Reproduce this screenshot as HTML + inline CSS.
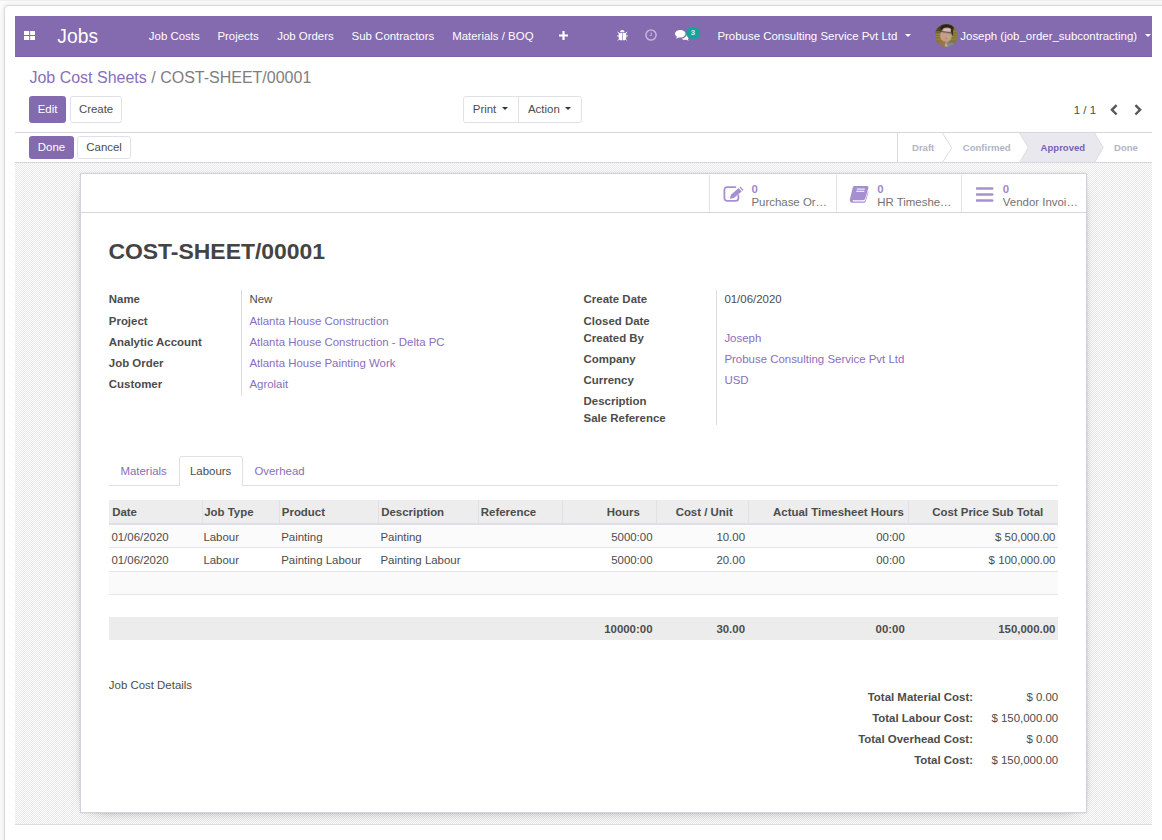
<!DOCTYPE html>
<html>
<head>
<meta charset="utf-8">
<title>COST-SHEET/00001 - Odoo</title>
<style>
*{box-sizing:border-box;margin:0;padding:0}
html,body{width:1162px;height:840px;overflow:hidden}
body{background:#fbfbfb;font-family:"Liberation Sans",sans-serif;font-size:11.45px;color:#4c4c4c;position:relative}
.topstrip{position:absolute;left:0;top:0;width:1162px;height:1px;background:#efefef}
.frame{position:absolute;left:4px;top:5px;width:1300px;height:900px;background:#fff;border:1px solid #d9d9d9;border-radius:4px;box-shadow:0 0 4px 1px rgba(0,0,0,.07)}
.shot{position:absolute;left:15px;top:16px;width:1137px;height:809px;overflow:hidden;background:#fff;border-bottom:1px solid #dcdcdc}
/* everything inside .shot is positioned in page coords minus (15,16) via wrapper */
.abs{position:absolute;left:-15px;top:-16px;width:1162px;height:840px}
.abs *{position:absolute;white-space:nowrap}
.nav{left:15px;top:16px;width:1137px;height:40.5px;background:#846aae;border-bottom:1px solid #7c60a8}
.nt{color:#fff;font-size:11.45px;line-height:14px;top:29.2px}
.brand{color:#fff;font-size:19.3px;line-height:22px;left:57.3px;top:25.9px}
.lnk{color:#8a6ebc}
.b{font-weight:bold}
.btn{height:27px;top:96px;border:1px solid #dfe1ea;border-radius:2.6px;background:#fff;font-size:11.45px;line-height:25px;text-align:center;color:#4c4c4c}
.btn.p{background:#846aae;border-color:#846aae;color:#fff}
.btn2{height:22.4px;top:136.2px;border:1px solid #dfe1ea;border-radius:2.6px;background:#fff;font-size:11.45px;line-height:20.4px;text-align:center;color:#4c4c4c}
.btn2.p{background:#846aae;border-color:#846aae;color:#fff}
.hl{height:1px;background:#d5d6de}
.car{width:0;height:0;border-left:3.2px solid transparent;border-right:3.2px solid transparent;border-top:3.6px solid #fff}
.bg{left:15px;top:163px;width:1137px;height:662px;background:repeating-conic-gradient(#e9e9e9 0% 25%,#fdfdfd 0% 50%) 0 0/2px 2px}
.sheet{left:80px;top:173px;width:1007.4px;height:639.6px;background:#fff;border:1px solid #d3d1e0;box-shadow:0 4.4px 17.6px -13px #000,0 0 2px rgba(0,0,0,.10)}
.lab{font-weight:bold;line-height:14px;font-size:11.45px;color:#4c4c4c}
.val{line-height:14px;font-size:11.45px}
.sb{font-size:9.55px;font-weight:bold;line-height:14px;top:140.8px;color:#b0b4c4}
.r{text-align:right}
</style>
</head>
<body>
<div class="topstrip"></div>
<div class="frame"></div>
<div class="shot"><div class="abs">

<!-- NAVBAR -->
<div class="nav"></div>
<svg style="left:23.6px;top:31.2px" width="11.4" height="9" viewBox="0 0 11.4 9"><rect x="0" y="0" width="5.2" height="4" fill="#fff"/><rect x="6.2" y="0" width="5.2" height="4" fill="#fff"/><rect x="0" y="5" width="5.2" height="4" fill="#fff"/><rect x="6.2" y="5" width="5.2" height="4" fill="#fff"/></svg>
<div class="brand">Jobs</div>
<div class="nt" style="left:148.8px">Job Costs</div>
<div class="nt" style="left:217.4px">Projects</div>
<div class="nt" style="left:277.2px">Job Orders</div>
<div class="nt" style="left:351.6px">Sub Contractors</div>
<div class="nt" style="left:452.2px">Materials / BOQ</div>
<svg style="left:559px;top:31.4px" width="9" height="9" viewBox="0 0 9 9"><path d="M3.4 0h2.2v3.4H9v2.2H5.6V9H3.4V5.6H0V3.4h3.4z" fill="#fff"/></svg>

<!-- bug -->
<svg style="left:617.2px;top:30px" width="10.9" height="10.9" viewBox="150 165 225 225"><g fill="#fff" stroke="none"><path d="M213 212A47 47 0 0 1 307 212z"/><path d="M185 228H256V378H245A60 60 0 0 1 185 318zM268 228H340V318A60 60 0 0 1 280 378H268z"/></g><g stroke="#fff" stroke-width="20" fill="none"><path d="M165 203L202 245M357 203L320 245M150 288H190M335 288H375M168 382L206 344M350 382L316 344"/></g></svg>
<!-- clock -->
<svg style="left:645.3px;top:29px" width="12" height="12" viewBox="0 0 12 12"><circle cx="6" cy="6" r="5.1" fill="none" stroke="#fff" stroke-opacity=".5" stroke-width="1.5"/><path d="M6.300 3.400v3.100H4.700" fill="none" stroke="#fff" stroke-opacity=".45" stroke-width="1.1"/></svg>
<!-- chat -->
<svg style="left:674.6px;top:29.6px" width="14" height="11.6" viewBox="0 0 28 23"><g fill="#fff"><path d="M10.5 0C4.700 0 0 3.400 0 7.600c0 2.400 1.500 4.500 3.900 5.900-.4 1.300-1.200 2.500-2.300 3.300 2.300-.1 4.300-.9 5.900-2.100 1 .2 2 .4 3 .4 5.800 0 10.500-3.400 10.500-7.600S16.300 0 10.500 0z"/><path d="M23.300 9.500c-.6 3.900-4.700 7.100-10 7.700 1.700 1.500 4.300 2.400 7.100 2.400.8 0 1.600-.1 2.300-.2 1.400 1 3.100 1.700 5 1.800-1-.8-1.600-1.800-1.900-2.900 1.400-1 2.200-2.400 2.200-4 0-2-1.900-3.900-4.700-4.800z"/></g></svg>
<div style="left:686px;top:27.1px;width:14px;height:11.8px;border-radius:6px;background:#17a398"></div>
<div style="left:686px;top:27.1px;width:14px;line-height:11.8px;text-align:center;font-size:7.8px;font-weight:bold;color:#d4f0ee">3</div>

<div class="nt" style="left:717.4px">Probuse Consulting Service Pvt Ltd</div>
<div class="car" style="left:905px;top:33.8px"></div>
<!-- avatar -->
<svg style="left:934.6px;top:24.1px" width="22.8" height="22.8" viewBox="240 115 640 640"><defs><clipPath id="av"><circle cx="560" cy="435" r="320"/></clipPath><filter id="bl" x="-10%" y="-10%" width="120%" height="120%"><feGaussianBlur stdDeviation="19"/></filter></defs><g clip-path="url(#av)"><rect x="200" y="80" width="720" height="720" fill="#84753a"/><g filter="url(#bl)"><ellipse cx="330" cy="200" rx="210" ry="160" fill="#40381e" opacity=".8"/><path d="M240 335H880M240 405H880M240 475H880M240 545H880" stroke="#a89a50" stroke-width="30" opacity=".5"/><path d="M240 370H880M240 440H880M240 510H880" stroke="#665a28" stroke-width="14" opacity=".5"/><ellipse cx="575" cy="235" rx="190" ry="115" fill="#2a221b"/><rect x="685" y="230" width="60" height="200" rx="30" fill="#30281f"/><ellipse cx="548" cy="430" rx="165" ry="200" fill="#c4a08c"/><ellipse cx="575" cy="280" rx="115" ry="60" fill="#d6bbb0"/><path d="M395 320L705 372" stroke="#403a36" stroke-width="36" opacity=".75" stroke-linecap="round"/><ellipse cx="550" cy="522" rx="48" ry="20" fill="#bf8486"/><ellipse cx="450" cy="665" rx="120" ry="75" fill="#9c7444"/><path d="M570 635L790 650L720 780H530z" fill="#7f8a96"/><path d="M545 600L600 760H505z" fill="#c8aa96"/></g></g></svg>
<div class="nt" style="left:960.3px">Joseph (job_order_subcontracting)</div>
<div class="car" style="left:1145px;top:33.8px"></div>

<!-- CONTROL PANEL -->
<div style="left:29.4px;top:68.1px;font-size:16px;line-height:20px;color:#7e7e7e"><span class="lnk" style="position:static">Job Cost Sheets</span> / COST-SHEET/00001</div>
<div class="btn p" style="left:29px;width:37.2px">Edit</div>
<div class="btn" style="left:70.4px;width:51.4px">Create</div>
<div class="btn" style="left:463.2px;width:56px;border-radius:2.6px 0 0 2.6px;text-align:left;padding-left:8.6px">Print</div>
<div class="btn" style="left:518.4px;width:63.8px;border-radius:0 2.6px 2.6px 0;text-align:left;padding-left:8.6px">Action</div>
<div class="car" style="left:502.2px;top:107.2px;border-top-color:#333"></div>
<div class="car" style="left:564.6px;top:107.2px;border-top-color:#333"></div>
<div style="left:1073.8px;top:102.6px;font-size:11.45px;line-height:14px;color:#4c4c4c;letter-spacing:0">1 / 1</div>
<svg style="left:1109.6px;top:104px" width="8" height="11.6" viewBox="0 0 8 11.6"><path d="M6.600 1.100L1.900 5.800l4.700 4.700" fill="none" stroke="#585858" stroke-width="2.400"/></svg>
<svg style="left:1134.4px;top:104px" width="8" height="11.6" viewBox="0 0 8 11.6"><path d="M1.400 1.100L6.100 5.800l-4.700 4.700" fill="none" stroke="#585858" stroke-width="2.400"/></svg>
<div class="hl" style="left:15px;top:132.2px;width:1137px"></div>

<!-- STATUS BAR -->
<div class="btn2 p" style="left:29px;width:45px">Done</div>
<div class="btn2" style="left:77.4px;width:53.4px">Cancel</div>
<div style="left:897.2px;top:133px;width:1px;height:29.4px;background:#d8d8e0"></div>
<svg style="left:898px;top:133.2px" width="254" height="29.4" viewBox="0 0 254 29.4">
 <path d="M121.600 0H196.600L205.200 14.700 196.600 29.400H121.600L130.200 14.700z" fill="#e8e8ee"/>
 <path d="M44.400 0L53.800 14.700 44.400 29.400" fill="none" stroke="#dcdce4" stroke-width="1"/>
 <path d="M121.600 0L130.200 14.700 121.600 29.400" fill="none" stroke="#dcdce4" stroke-width="1"/>
 <path d="M196.600 0L205.200 14.700 196.600 29.400" fill="none" stroke="#dcdce4" stroke-width="1"/>
</svg>
<div class="sb" style="left:912px">Draft</div>
<div class="sb" style="left:962.8px">Confirmed</div>
<div class="sb" style="left:1040.6px;color:#7b5fb0">Approved</div>
<div class="sb" style="left:1114px">Done</div>
<div class="hl" style="left:15px;top:162.4px;width:1137px"></div>

<!-- CONTENT BG + SHEET -->
<div class="bg"></div>
<div class="sheet"></div>

<!-- STAT BUTTONS -->
<div class="hl" style="left:80.5px;top:211.8px;width:1006px;background:#d6d4e2"></div>
<div style="left:709px;top:174.5px;width:1px;height:37.5px;background:#e3e1ec"></div>
<div style="left:835.6px;top:174.5px;width:1px;height:37.5px;background:#e3e1ec"></div>
<div style="left:961.4px;top:174.5px;width:1px;height:37.5px;background:#e3e1ec"></div>
<!-- pencil-square -->
<svg style="left:723px;top:185px" width="22" height="18" viewBox="0 0 22 18"><path d="M12.400 2.200H4a2.600 2.600 0 0 0-2.600 2.600V13.300a2.600 2.600 0 0 0 2.600 2.600H12.800a2.600 2.600 0 0 0 2.600-2.600V10.400" fill="none" stroke="#a690d3" stroke-width="1.800" stroke-linecap="round"/><path d="M6.900 13.700L7.900 9.800 15.700 3.100 18.700 6.500 10.900 13.000zM16.600 2.400L17.600 1.500 20.600 4.900 19.600 5.800z" fill="#a690d3"/></svg>
<div class="b" style="left:751.4px;top:182.4px;line-height:14px;color:#9f88d2">0</div>
<div style="left:751.4px;top:195.4px;line-height:14px;color:#727272">Purchase Or…</div>
<!-- book -->
<svg style="left:849.4px;top:186.4px" width="19.6" height="17" viewBox="0 0 19.6 17"><path d="M5.600 0h12.400a1.400 1.400 0 0 1 1.400 1.900L16.200 12.800a2 2 0 0 1-1.900 1.400H4.200c-.900 0-.900 1.200 0 1.200h10.600c.800 0 1.300-.400 1.600-1.200l2.600-8.800.600.300-2.700 9.200c-.400 1.200-1.200 1.900-2.400 1.900H3.600c-2.600 0-3.200-2.200-2.600-4L3.800 1.400C4.100.500 4.700 0 5.600 0z" fill="#a58fd0"/><path d="M7.800 3.100h8M7.300 5.300h8" stroke="#fff" stroke-width="1"/></svg>
<div class="b" style="left:877.2px;top:182.4px;line-height:14px;color:#9f88d2">0</div>
<div style="left:877.2px;top:195.4px;line-height:14px;color:#727272">HR Timeshe…</div>
<!-- bars -->
<svg style="left:976.4px;top:187.4px" width="17.2" height="15" viewBox="0 0 17.2 15"><path d="M1 1.500h15.200M1 7.500h15.200M1 13.500h15.200" stroke="#a690d3" stroke-width="2.700" stroke-linecap="round"/></svg>
<div class="b" style="left:1002.8px;top:182.4px;line-height:14px;color:#9f88d2">0</div>
<div style="left:1002.8px;top:195.4px;line-height:14px;color:#727272">Vendor Invoi…</div>

<!-- TITLE -->
<div class="b" style="left:108.4px;top:238.4px;font-size:22.95px;line-height:27px;color:#444">COST-SHEET/00001</div>

<!-- LEFT GROUP -->
<div style="left:241.4px;top:290.4px;width:1px;height:106px;background:#dcdce0"></div>
<div class="lab" style="left:108.8px;top:292.3px">Name</div>
<div class="lab" style="left:108.8px;top:313.5px">Project</div>
<div class="lab" style="left:108.8px;top:334.7px">Analytic Account</div>
<div class="lab" style="left:108.8px;top:355.9px">Job Order</div>
<div class="lab" style="left:108.8px;top:377.1px">Customer</div>
<div class="val" style="left:249.4px;top:292.3px">New</div>
<div class="val lnk" style="left:249.4px;top:313.5px">Atlanta House Construction</div>
<div class="val lnk" style="left:249.4px;top:334.7px">Atlanta House Construction - Delta PC</div>
<div class="val lnk" style="left:249.4px;top:355.9px">Atlanta House Painting Work</div>
<div class="val lnk" style="left:249.4px;top:377.1px">Agrolait</div>

<!-- RIGHT GROUP -->
<div style="left:716.2px;top:290.4px;width:1px;height:135px;background:#dcdce0"></div>
<div class="lab" style="left:583.6px;top:292.3px">Create Date</div>
<div class="lab" style="left:583.6px;top:313.5px">Closed Date</div>
<div class="lab" style="left:583.6px;top:330.5px">Created By</div>
<div class="lab" style="left:583.6px;top:351.7px">Company</div>
<div class="lab" style="left:583.6px;top:372.9px">Currency</div>
<div class="lab" style="left:583.6px;top:394.1px">Description</div>
<div class="lab" style="left:583.6px;top:411.1px">Sale Reference</div>
<div class="val" style="left:724.4px;top:292.3px">01/06/2020</div>
<div class="val lnk" style="left:724.4px;top:330.5px">Joseph</div>
<div class="val lnk" style="left:724.4px;top:351.7px">Probuse Consulting Service Pvt Ltd</div>
<div class="val lnk" style="left:724.4px;top:372.9px">USD</div>

<!-- TABS -->
<div class="hl" style="left:108.8px;top:484.8px;width:949.4px;background:#dfdfe8"></div>
<div style="left:178.6px;top:456.4px;width:64.2px;height:29.4px;background:#fff;border:1px solid #dfdfe8;border-bottom:none;border-radius:2.6px 2.6px 0 0"></div>
<div class="val lnk" style="left:120.4px;top:464.2px">Materials</div>
<div class="val" style="left:190px;top:464.2px;color:#4c4c4c">Labours</div>
<div class="val lnk" style="left:254.4px;top:464.2px">Overhead</div>

<!-- TABLE -->
<div style="left:108.8px;top:500px;width:949.4px;height:25px;background:#ededed;border-bottom:2px solid #dfdfe8"></div>
<div style="left:108.8px;top:525px;width:949.4px;height:22.6px;background:#fbfbfb"></div>
<div style="left:201.600px;top:500.2px;width:1px;height:23px;background:#e2e2e6"></div>
<div style="left:278.8px;top:500.2px;width:1px;height:23px;background:#e2e2e6"></div>
<div style="left:378.4px;top:500.2px;width:1px;height:23px;background:#e2e2e6"></div>
<div style="left:477.8px;top:500.2px;width:1px;height:23px;background:#e2e2e6"></div>
<div style="left:562.2px;top:500.2px;width:1px;height:23px;background:#e2e2e6"></div>
<div style="left:656.2px;top:500.2px;width:1px;height:23px;background:#e2e2e6"></div>
<div style="left:748.2px;top:500.2px;width:1px;height:23px;background:#e2e2e6"></div>
<div style="left:907.600px;top:500.2px;width:1px;height:23px;background:#e2e2e6"></div>
<div class="lab" style="left:112.2px;top:505.1px">Date</div>
<div class="lab" style="left:204.2px;top:505.1px">Job Type</div>
<div class="lab" style="left:281.8px;top:505.1px">Product</div>
<div class="lab" style="left:381.2px;top:505.1px">Description</div>
<div class="lab" style="left:480.8px;top:505.1px">Reference</div>
<div class="lab r" style="right:522.2px;top:505.1px">Hours</div>
<div class="lab r" style="right:429.2px;top:505.1px">Cost / Unit</div>
<div class="lab r" style="right:258.2px;top:505.1px">Actual Timesheet Hours</div>
<div class="lab r" style="right:118.8px;top:505.1px">Cost Price Sub Total</div>

<div class="hl" style="left:108.8px;top:547.4px;width:949.4px;background:#e4e4ea"></div>
<div class="hl" style="left:108.8px;top:570.6px;width:949.4px;background:#e4e4ea"></div>
<div style="left:108.8px;top:571.6px;width:949.4px;height:22px;background:#fafafa"></div>
<div class="hl" style="left:108.8px;top:593.6px;width:949.4px;background:#e4e4ea"></div>
<div style="left:108.8px;top:617px;width:949.4px;height:22.600px;background:#ececec"></div>

<div class="val" style="left:111.4px;top:530px">01/06/2020</div>
<div class="val" style="left:203.4px;top:530px">Labour</div>
<div class="val" style="left:281.2px;top:530px">Painting</div>
<div class="val" style="left:380.4px;top:530px">Painting</div>
<div class="val r" style="right:509.5px;top:530px">5000:00</div>
<div class="val r" style="right:417px;top:530px">10.00</div>
<div class="val r" style="right:257.2px;top:530px">00:00</div>
<div class="val r" style="right:106.600px;top:530px">$ 50,000.00</div>

<div class="val" style="left:111.4px;top:553.2px">01/06/2020</div>
<div class="val" style="left:203.4px;top:553.2px">Labour</div>
<div class="val" style="left:281.2px;top:553.2px">Painting Labour</div>
<div class="val" style="left:380.4px;top:553.2px">Painting Labour</div>
<div class="val r" style="right:509.5px;top:553.2px">5000:00</div>
<div class="val r" style="right:417px;top:553.2px">20.00</div>
<div class="val r" style="right:257.2px;top:553.2px">00:00</div>
<div class="val r" style="right:106.600px;top:553.2px">$ 100,000.00</div>

<div class="lab r" style="right:509.5px;top:621.600px">10000:00</div>
<div class="lab r" style="right:417px;top:621.600px">30.00</div>
<div class="lab r" style="right:257.2px;top:621.600px">00:00</div>
<div class="lab r" style="right:106.600px;top:621.600px">150,000.00</div>

<!-- BOTTOM -->
<div class="val" style="left:108.8px;top:677.8px">Job Cost Details</div>
<div class="lab r" style="right:189px;top:690.2px">Total Material Cost:</div>
<div class="lab r" style="right:189px;top:711.4px">Total Labour Cost:</div>
<div class="lab r" style="right:189px;top:732.2px">Total Overhead Cost:</div>
<div class="lab r" style="right:189px;top:753.4px">Total Cost:</div>
<div class="val r" style="right:103.8px;top:690.2px">$ 0.00</div>
<div class="val r" style="right:103.8px;top:711.4px">$ 150,000.00</div>
<div class="val r" style="right:103.8px;top:732.2px">$ 0.00</div>
<div class="val r" style="right:103.8px;top:753.4px">$ 150,000.00</div>

</div></div>
</body>
</html>
